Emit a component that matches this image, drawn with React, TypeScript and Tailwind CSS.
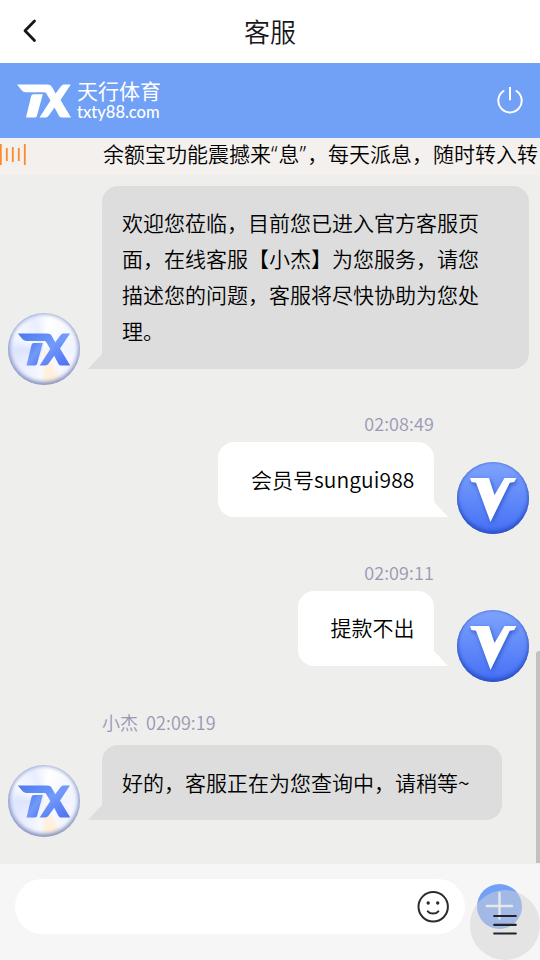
import { ReactNode } from "react";

function TxShape() {
  return (
    <>
      <path d="M0 0.5H30C33 0.5 34.3 1.5 35.6 4L38.6 9.5L44 2.2C45 1 46 0.5 47.5 0.5H53.8L43.5 16L54 33.5H45C43.5 33.5 42.6 33 41.8 31.6L37.5 23.5L31.6 31.8C30.6 33.2 29.5 33.5 28 33.5H22.5L33.5 16.5L29.5 9.8C28.8 8.5 28 8.2 26.5 8.2H9C7 8.2 5.8 7.5 4.5 6Z" />
      <path d="M16.8 10.3H25.8L20 31.5C19.5 33 19 33.5 17.5 33.5H9L14 12.8C14.5 11 15.2 10.3 16.8 10.3Z" />
    </>
  );
}

function AgentAvatar() {
  return (
    <div className="flex h-18 w-18 shrink-0 items-center justify-center rounded-full bg-[conic-gradient(from_10deg,#fff,#f1f3ff_20%,#f7f7ff_38%,#fff0dc_41%,#fff0dc_46%,#f7f8ff_49%,#e9edff_62%,#dde4ff_72%,#f9faff_80%,#e9eeff_92%,#fff)] shadow-[inset_0_0_5px_#8f9fce,inset_0_-2px_5px_#7080b0]">
      <svg className="h-[33px] w-[54px]" viewBox="0 0 54 34">
        <defs>
          <linearGradient id="mark" x1="0" y1="0" x2="1" y2="1">
            <stop offset="0" stopColor="#4b78ee" />
            <stop offset=".5" stopColor="#739bfb" />
            <stop offset="1" stopColor="#4c70f2" />
          </linearGradient>
        </defs>
        <g fill="url(#mark)">
          <TxShape />
        </g>
      </svg>
    </div>
  );
}

function MemberAvatar() {
  return (
    <div className="h-18 w-18 shrink-0 rounded-full bg-linear-to-b from-[#7fa3fd] to-[#456ff5] shadow-[inset_0_-3px_4px_#2c50c4,inset_0_0_3px_#4568c8]">
      <svg className="h-18 w-18 drop-shadow-[1px_2px_2px_#3058cc]" viewBox="0 0 72 72" fill="#fff">
        <path d="M13 16H32L37.5 33L47.5 16H59.3L57.3 20L52.8 20.8L33.5 60L19 20.8L14.5 20Z" />
      </svg>
    </div>
  );
}

function AgentRow({ children, width }: { children: ReactNode; width: string }) {
  return (
    <div className="flex items-end gap-[22px] pl-2">
      <AgentAvatar />
      <div className={`relative rounded-2xl rounded-bl-none bg-[#ddd] pl-5 ${width}`}>
        {children}
        <svg className="absolute bottom-0 -left-3.5 h-[15px] w-3.5" viewBox="0 0 14 15" fill="#ddd">
          <path d="M14 0V15H0Z" />
        </svg>
      </div>
    </div>
  );
}

function MemberRow({ time, children }: { time: string; children: ReactNode }) {
  return (
    <div className="mt-5">
      <p className="mb-px pr-[106px] text-right text-lg leading-9 tracking-[0.1px] text-[#9c97b3]">{time}</p>
      <div className="flex items-end justify-end gap-[23px] pr-[11px]">
        <div className="relative mb-[16.5px] rounded-2xl rounded-br-none bg-white pt-[18.5px] pr-[19.5px] pb-[20.5px] pl-[33px]">
          {children}
          <svg className="absolute -right-3.5 bottom-0 h-[15px] w-3.5" viewBox="0 0 14 15" fill="#fff">
            <path d="M0 0V15H14Z" />
          </svg>
        </div>
        <MemberAvatar />
      </div>
    </div>
  );
}

export default function App() {
  return (
    <div className="relative flex h-[960px] w-[540px] flex-col overflow-hidden bg-[#eeeeec] font-['Noto_Sans_CJK_SC',sans-serif] font-[350] text-black">
      <header className="flex h-[63px] shrink-0 items-center bg-white">
        <svg className="mb-0.5 ml-5 h-6 w-5" viewBox="0 0 20 24" fill="none" stroke="#17171c" strokeWidth="2.8" strokeLinecap="round" strokeLinejoin="round">
          <path d="M14.5 2L5 11.8L14.5 21.5" />
        </svg>
        <h1 className="flex-1 pr-10 pb-[3px] text-center text-[26px] font-[350] text-[#17171c]">客服</h1>
      </header>

      <div className="flex h-[75px] shrink-0 items-center bg-[#71a1f6] pl-[17px] text-white">
        <svg className="h-[34px] w-[54px]" viewBox="0 0 54 34" fill="currentColor">
          <TxShape />
        </svg>
        <div className="ml-1.5 flex-1">
          <p className="text-[21px] leading-[22px] font-normal">天行体育</p>
          <p className="pt-0.5 font-['Lato',sans-serif] text-[16.5px] leading-[19px] font-medium">txty88.com</p>
        </div>
        <svg className="mr-4 h-7 w-7" viewBox="0 0 28 28" fill="none" stroke="#fff" strokeWidth="2" strokeLinecap="round">
          <path d="M14 0.5V12.5M7.5 4A11.7 11.7 0 1 0 20.5 4" />
        </svg>
      </div>

      <div className="flex h-[37px] shrink-0 items-start bg-[#f4f0ed]">
        <svg className="mt-1 h-6 w-[27px] shrink-0" viewBox="0 0 27 24" stroke="#fb8a2a" strokeWidth="1.8">
          <path d="M0.8 2V23M6.8 6V19M12.8 5V20M18.8 6V19M24.8 2V23" />
        </svg>
        <p className="ml-19 overflow-hidden text-[21px] leading-[30px] whitespace-nowrap">
          余额宝功能震撼来<span className="mr-px font-['Noto_Sans']">“</span>息<span className="mr-px font-['Noto_Sans']">”</span>，每天派息，随时转入转
        </p>
      </div>

      <main className="flex-1 overflow-hidden pt-[11px] text-[21px] leading-9">
        <AgentRow width="mb-4 w-[427px] pt-[18px] pr-[49px] pb-[21px]">
          欢迎您莅临，目前您已进入官方客服页面，在线客服【小杰】为您服务，请您描述您的问题，客服将尽快协助为您处理。
        </AgentRow>
        <MemberRow time="02:08:49">
          会员号<span className="tracking-[0.1px]">sungui988</span>
        </MemberRow>
        <MemberRow time="02:09:11">提款不出</MemberRow>
        <p className="mt-[22px] mb-[5px] pl-[102px] text-lg leading-9 text-[#9c97b3]">
          小杰<span className="ml-2 tracking-[0.1px]">02:09:19</span>
        </p>
        <AgentRow width="mb-[17px] w-[400px] pt-[19px] pb-5">好的，客服正在为您查询中，请稍等~</AgentRow>
      </main>

      <footer className="flex h-24 shrink-0 items-start bg-[#f6f6f6] pt-[15px] pl-[15px]">
        <div className="flex h-[55px] w-[450px] items-center justify-end rounded-full bg-white pr-[15px]">
          <svg className="h-[34px] w-[34px]" viewBox="0 0 34 34" fill="none" stroke="#2c2c30" strokeWidth="2" strokeLinecap="round">
            <circle cx="17.2" cy="16.8" r="14.7" />
            <path d="M11.8 21.3C14 24.3 20 24.3 22.3 21.3" />
            <circle cx="12.2" cy="13" r="1.7" fill="#2c2c30" stroke="none" />
            <circle cx="21.7" cy="13" r="1.7" fill="#2c2c30" stroke="none" />
          </svg>
        </div>
        <svg className="mt-[5px] ml-3 h-[45px] w-[45px]" viewBox="0 0 45 45">
          <circle cx="22.5" cy="22.5" r="22.5" fill="#71a1f6" />
          <path d="M22.5 9V34.5M9.8 22H35" stroke="#fff" strokeWidth="2.4" strokeLinecap="round" />
        </svg>
      </footer>

      {/* Scroll thumb */}
      <div className="absolute top-[651px] -right-0.5 h-[212px] w-1.5 rounded-t-sm bg-[#c1c1c1]" />

      {/* Floating menu */}
      <button className="absolute top-[890px] left-[470px] flex h-[70px] w-[70px] items-center justify-center rounded-full bg-[#d2d2d2]/50">
        <svg className="h-6 w-6" viewBox="0 0 24 24" stroke="#242428" strokeWidth="2.2" strokeLinecap="round">
          <path d="M1.2 3H22.8M1.2 11.8H22.8M1.2 20.5H22.8" />
        </svg>
      </button>
    </div>
  );
}
